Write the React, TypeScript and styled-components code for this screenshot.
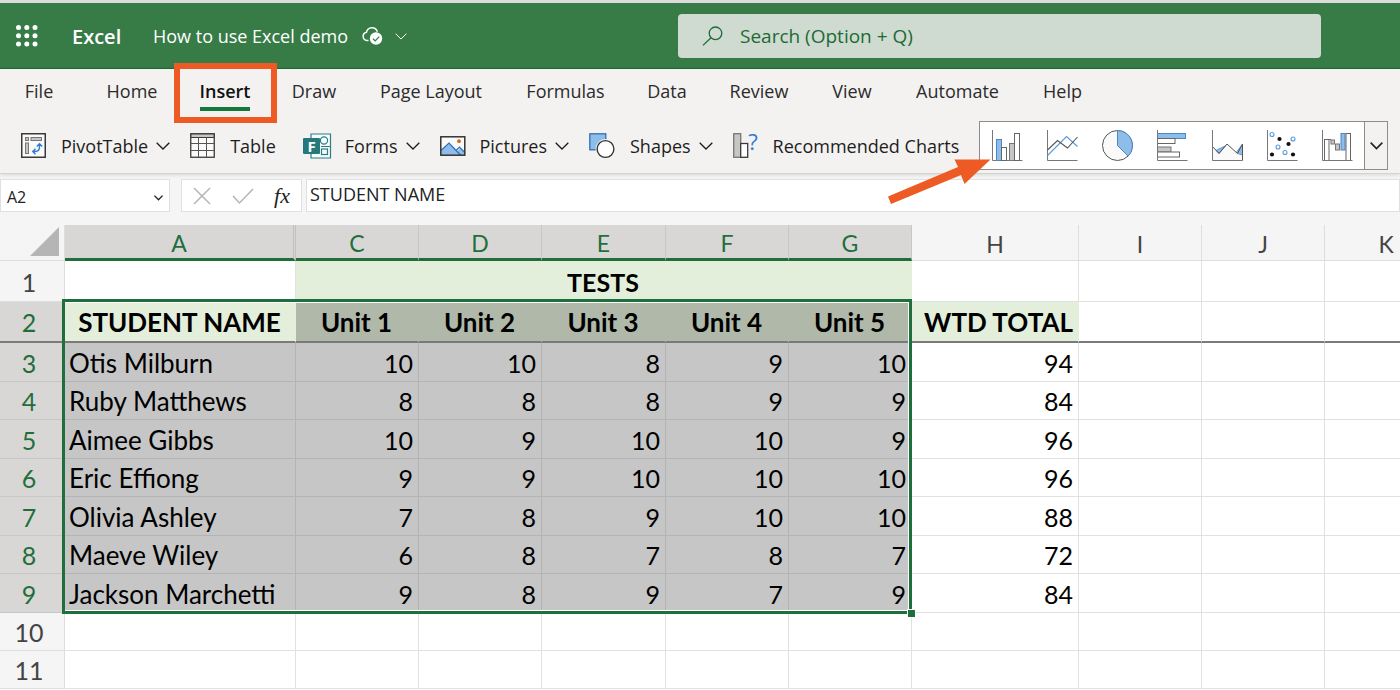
import React from "react";
import styled, { createGlobalStyle, css } from "styled-components";

const ui = `"Open Sans", "Noto Sans", sans-serif`;
const sheetFont = `Lato, "Open Sans", sans-serif`;

const color = {
  brand: "#377b47",
  brandDark: "#1f6f3c",
  accent: "#ee5a24",
  ribbon: "#f3f2f1",
  line: "#e1e1e1",
  blue: "#8fbde9",
  blueLine: "#2f6fb8",
};

const GlobalStyle = createGlobalStyle`
  * { box-sizing: border-box; }
  body { margin: 0; background: #fff; font-family: ${ui}; color: #222; overflow: hidden; }
  button, input { font: inherit; color: inherit; border: 0; margin: 0; padding: 0; background: none; outline: none; }
  button { display: flex; align-items: center; cursor: pointer; white-space: nowrap; }
  svg { display: block; flex: none; overflow: visible; }
`;

const Page = styled.div`
  display: flex;
  flex-direction: column;
  overflow: hidden;
`;

/* ---------- title bar ---------- */
const TitleBar = styled.header`
  display: flex;
  align-items: center;
  height: 69px;
  padding: 0 79px 0 16px;
  background: ${color.brand};
  border-top: 3px solid #dcdcdc;
  border-bottom: 1px solid #1e6b33;
  color: #fff;
`;
const TitleGroup = styled.div`
  display: flex;
  align-items: center;
  flex: 0 0 662px;
  padding-top: 1px;
`;
const AppName = styled.span`
  margin-left: 34px;
  width: 81px;
  font-size: 20px;
  font-weight: 600;
`;
const DocName = styled.button`
  gap: 14px;
  font-size: 18px;
  svg + svg { margin-left: -2px; }
`;
const SearchBox = styled.label`
  display: flex;
  align-items: center;
  flex: 1;
  gap: 16px;
  height: 44px;
  padding-left: 24px;
  border-radius: 4px;
  background: #cfdbd0;
  color: #1d6a35;
`;
const SearchInput = styled.input`
  flex: 1;
  font-size: 19px;
  &::placeholder { color: #1d6a35; opacity: 1; }
`;

/* ---------- ribbon ---------- */
const Ribbon = styled.div`
  background: ${color.ribbon};
  border-bottom: 1px solid #d4d3d2;
  box-shadow: 0 1px 4px rgba(0, 0, 0, 0.12);
  position: relative;
`;
const Tabs = styled.nav`
  display: flex;
  height: 52px;
  padding-left: 3px;
`;
const Tab = styled.button<{ $w: number; $active?: boolean }>`
  position: relative;
  justify-content: center;
  width: ${(p) => p.$w}px;
  height: 44px;
  font-size: 18px;
  font-weight: ${(p) => (p.$active ? 600 : 400)};
  color: ${(p) => (p.$active ? "#111" : "#2b2b2b")};
  &:first-child { margin-right: 10px; }
  ${(p) =>
    p.$active &&
    css`
      &::after {
        content: "";
        position: absolute;
        left: 21px;
        right: 21px;
        bottom: 2px;
        height: 4px;
        background: #12793b;
      }
    `}
`;
const Highlight = styled.span`
  position: absolute;
  z-index: 2;
  inset: -6px -6px -10px -5px;
  border: 6px solid ${color.accent};
  pointer-events: none;
`;
const Tools = styled.div`
  display: flex;
  align-items: center;
  height: 52px;
  padding: 0 12px 3px 21px;
`;
const Tool = styled.button<{ $gap: number }>`
  gap: 15px;
  margin-right: ${(p) => p.$gap}px;
  font-size: 18px;
  color: #1d1d1d;
  svg + span { display: flex; align-items: center; gap: 8px; }
`;
const Gallery = styled.div`
  position: relative;
  display: flex;
  height: 49px;
  margin-left: auto;
  border: 1px solid #8c8c8c;
  background: #fff;
`;
const GalleryItems = styled.div`
  display: flex;
  gap: 24px;
  padding: 0 11px 0 12px;
`;
const GalleryMore = styled.button`
  justify-content: center;
  width: 23px;
  border-left: 1px solid #8c8c8c;
  background: ${color.ribbon};
`;
const Arrow = styled.svg`
  position: absolute;
  z-index: 3;
  left: -94px;
  top: 36px;
  pointer-events: none;
`;

/* ---------- formula bar ---------- */
const FormulaBar = styled.div`
  display: flex;
  align-items: center;
  height: 51px;
  padding-bottom: 8px;
  background: #f5f5f5;
`;
const Field = styled.div<{ $w?: number; $mr?: number }>`
  display: flex;
  align-items: center;
  min-width: 0;
  height: 33px;
  flex: ${(p) => (p.$w ? `0 0 ${p.$w}px` : "1")};
  margin-right: ${(p) => p.$mr ?? 0}px;
  border: 1px solid #e0e0e0;
  background: #fff;
`;
const FieldInput = styled.input<{ $size: number; $pad: string }>`
  flex: 1;
  width: 0;
  min-width: 0;
  padding: ${(p) => p.$pad};
  font-size: ${(p) => p.$size}px;
`;
const DropButton = styled.button`
  padding: 4px 6px 0;
`;
const Actions = styled(Field)`
  justify-content: space-between;
  padding: 0 11px;
`;
const FxButton = styled.button`
  font: italic 22px/26px "Liberation Serif", serif;
`;

/* ---------- sheet ---------- */
const SheetArea = styled.main`
  position: relative;
  background: #fff;
`;
const Sheet = styled.table`
  table-layout: fixed;
  width: 1448px;
  border-collapse: separate;
  border-spacing: 0;
  font-family: ${sheetFont};
  font-size: 25px;
  line-height: 30px;
  color: #000;
`;
const Row = styled.tr<{ $h: number; $frozen?: boolean }>`
  height: ${(p) => p.$h}px;
  ${(p) =>
    p.$frozen &&
    css`
      && > * { border-bottom: 2px solid #7a7a7a; }
    `}
`;
const HeadCell = styled.th<{ $on?: boolean; $hiddenNext?: boolean }>`
  padding: 2px 0 0;
  font-size: 23px;
  font-weight: 400;
  color: ${(p) => (p.$on ? color.brandDark : "#444")};
  background: ${(p) => (p.$on ? "#d9d7d6" : "#f5f5f5")};
  border-right: ${(p) => (p.$hiddenNext ? "3px double #c2c0bf" : `1px solid ${p.$on ? "#c9c7c6" : "#dedede"}`)};
  border-bottom: ${(p) => (p.$on ? `3px solid ${color.brandDark}` : "1px solid #dedede")};
`;
const RowHead = styled.th<{ $on?: boolean }>`
  padding: 1px 6px 0 0;
  font-weight: 400;
  color: ${(p) => (p.$on ? color.brandDark : "#444")};
  background: ${(p) => (p.$on ? "#d9d7d6" : "#f5f5f5")};
  border-right: 1px solid #dedede;
  border-bottom: 1px solid ${(p) => (p.$on ? "#c9c7c6" : "#dedede")};
`;
const Corner = styled.td`
  padding: 0 5px 4px 0;
  background: #f5f5f5;
  border-right: 1px solid #dedede;
  border-bottom: 1px solid #dedede;
  vertical-align: bottom;
  svg { margin-left: auto; }
`;
type Fill = "none" | "green" | "greenOn" | "on";
const fills: Record<Fill, [string, string]> = {
  none: ["#fff", color.line],
  green: ["#e3efda", "#e3efda"],
  greenOn: ["#b0b9a9", "#b0b9a9"],
  on: ["#c6c6c6", "#b4b4b4"],
};
const Cell = styled.td<{ $fill?: Fill; $align?: string; $bold?: boolean; $large?: boolean }>`
  padding: 1px 5px 0 4px;
  white-space: nowrap;
  text-align: ${(p) => p.$align ?? "right"};
  font-size: ${(p) => (p.$large ? 26 : 25)}px;
  font-weight: ${(p) => (p.$bold ? 700 : 400)};
  background: ${(p) => fills[p.$fill ?? "none"][0]};
  border-right: 1px solid ${(p) => fills[p.$fill ?? "none"][1]};
  border-bottom: 1px solid ${(p) => fills[p.$fill ?? "none"][1]};
`;
const Selection = styled.div`
  position: absolute;
  left: 62px;
  top: 74px;
  width: 850px;
  height: 315px;
  border: 3px solid ${color.brandDark};
  box-shadow: inset -1px 1px 0 #fff, inset 0 -1px 0 #fff;
  pointer-events: none;
`;
const FillHandle = styled.i`
  position: absolute;
  right: -7px;
  bottom: -7px;
  width: 9px;
  height: 9px;
  border: 1px solid #fff;
  background: ${color.brandDark};
`;

/* ---------- icons ---------- */
const Chevron = ({ w = 14, sw = 1.3 }: { w?: number; sw?: number }) => (
  <svg width={w} height={w / 2 + 1} viewBox="0 0 14 8" fill="none" stroke="currentColor" strokeWidth={sw * (14 / w)}>
    <path d="M.7.7 7 7 13.3.7" />
  </svg>
);

const Waffle = () => (
  <svg width="22" height="22" fill="#fff">
    {[2.5, 10.8, 19].map((y) => [2.5, 10.8, 19].map((x) => <circle key={`${x}-${y}`} cx={x} cy={y} r="2.5" />))}
  </svg>
);

const CloudSaved = () => (
  <svg width="21" height="20" viewBox="0 0 21 20">
    <path d="M6.500 14.500H5A4.200 4.200 0 0 1 4.500 6.200 5.600 5.600 0 0 1 15.400 5.800" fill="none" stroke="#fff" strokeWidth="1.500" />
    <circle cx="14" cy="12.500" r="6.200" fill="#fff" />
    <path d="m11 12.800 2.200 2.100 4-4.300" fill="none" stroke={color.brand} strokeWidth="1.300" />
  </svg>
);

const SearchIcon = () => (
  <svg width="22" height="20" viewBox="0 0 22 20" fill="none" stroke="#1d6a35" strokeWidth="1.300">
    <circle cx="13.500" cy="7.300" r="6.300" />
    <path d="M9 11.800 1 19.400" />
  </svg>
);

const PivotIcon = () => (
  <svg width="25" height="25" fill="none">
    <rect x=".75" y=".75" width="23.500" height="23.500" fill="#fafafa" stroke="#3a3a3a" strokeWidth="1.500" />
    <g fill="#c8c6c4" stroke="#777">
      <rect x="4.500" y="4.500" width="3" height="3" />
      <rect x="10" y="4.500" width="10.500" height="3" />
      <rect x="4.500" y="10" width="3" height="10.500" />
    </g>
    <path d="M18.500 11V14q0 4.500-4.500 4.500h-2M15.800 13.500 18.500 10.800l2.700 2.700M14.500 15.800 11.800 18.500l2.700 2.700" stroke="#2b7cd3" strokeWidth="1.400" />
  </svg>
);

const TableIcon = () => (
  <svg width="25" height="25" fill="none" stroke="#3a3a3a">
    <rect x=".75" y=".75" width="23.500" height="23.500" fill="#fafafa" strokeWidth="1.300" />
    <rect x="1" y="1" width="23" height="3.500" fill="#c8c6c4" />
    <path d="M8.500 4.500V24M16.500 4.500V24M1 10.500h23M1 17.500h23" stroke="#555" />
  </svg>
);

const FormsIcon = () => (
  <svg width="26" height="26" fill="none" stroke="#2b7f83" strokeWidth="1.200">
    <path d="M7 1H26.500V25H7zM17 13.500H26.500" fill="#f8fbfb" />
    <circle cx="20" cy="7.500" r="3.600" />
    <rect x="17.500" y="16" width="6" height="5.500" />
    <rect x="-1" y="5" width="17" height="16" rx="1" fill="#24797d" stroke="none" />
    <text x="7.500" y="18.500" textAnchor="middle" fontFamily="Open Sans" fontWeight="700" fontSize="15" fill="#fff" stroke="none">F</text>
  </svg>
);

const PictureIcon = () => (
  <svg width="25" height="20" fill="none">
    <rect x=".8" y=".8" width="24" height="18.400" fill="#fafafa" />
    <path d="M1 14.500 9 7l8.500 8L20 12l5 4.500V19H1z" fill={color.blue} />
    <path d="M1 14.500 9 7l11.500 12M16 14.500l3.500-3.500 5.300 5.500" stroke={color.blueLine} strokeWidth="1.200" />
    <rect x=".8" y=".8" width="24" height="18.400" stroke="#333" strokeWidth="1.500" />
    <circle cx="19" cy="5.200" r="1.900" fill="#d8651f" />
  </svg>
);

const ShapesIcon = () => (
  <svg width="26" height="25">
    <rect x=".8" y=".8" width="16" height="16" fill={color.blue} stroke={color.blueLine} strokeWidth="1.300" />
    <circle cx="16.500" cy="16" r="10" fill={color.ribbon} />
    <circle cx="16.500" cy="16" r="8.400" fill="#fff" stroke="#333" strokeWidth="1.400" />
  </svg>
);

const RecommendedIcon = () => (
  <svg width="25" height="25">
    <rect x=".7" y=".7" width="7" height="23.600" fill="#c8c6c4" stroke="#777" strokeWidth="1.300" />
    <rect x="7.700" y="10.500" width="7" height="13.800" fill="#fff" stroke="#3a3a3a" strokeWidth="1.300" />
    <text x="20" y="16.500" textAnchor="middle" fontFamily="Open Sans" fontSize="22" fill="#2b7cd3">?</text>
  </svg>
);

const Axes = () => <path d="M.5 0V30.500H30.500" fill="none" stroke="#777" />;
const white = { fill: "#fff", stroke: "#666", strokeWidth: 1 };
const gray = { fill: "#c8c6c4", stroke: "#777", strokeWidth: 1 };
const blue = { fill: color.blue, stroke: "#4b86c6", strokeWidth: 1 };

const chartIcons: [string, React.ReactNode][] = [
  ["Column", <>
    <Axes />
    <rect x="4.500" y="9.500" width="5" height="21" {...blue} />
    <rect x="9.500" y="17.500" width="5" height="13" {...white} />
    <rect x="17.500" y="13.500" width="5" height="17" {...gray} />
    <rect x="22.500" y="3.500" width="5" height="27" {...white} />
  </>],
  ["Line", <>
    <Axes />
    <path d="M.5 25.500 19.500 6.500 30.500 16.500" fill="none" stroke="#5b9bdc" strokeWidth="1.200" />
    <path d="M.5 20 10.500 10.500 20.500 18 30.500 7" fill="none" stroke="#555" strokeWidth="1.100" />
  </>],
  ["Pie", <>
    <circle cx="15.500" cy="15.500" r="15" fill="#fafafa" stroke="#555" />
    <path d="M15.500 15.500V.5A15 15 0 0 1 26.100 26.100z" {...blue} />
  </>],
  ["Bar", <>
    <rect x=".5" y="3.500" width="28" height="5" {...blue} />
    <rect x=".5" y="8.500" width="17.500" height="5" {...white} />
    <rect x=".5" y="17" width="13.500" height="5" {...gray} />
    <rect x=".5" y="22" width="22" height="5" {...white} />
    <Axes />
  </>],
  ["Area", <>
    <path d="M.5 16.500 7 23.500 15 14 25.500 23.500 30.500 14V30.500H.5z" fill="#fafafa" />
    <path d="M4 20.500 7 23.500 13.500 15.800zM25 21.500 30.500 14V25L25.500 23.500z" fill={color.blue} stroke="#4b86c6" strokeWidth=".8" />
    <path d="M.5 16.500 7 23.500 15 14 25.500 23.500 30.500 14V30.500" fill="none" stroke="#555" />
    <Axes />
  </>],
  ["Scatter", <>
    <Axes />
    {[[5, 4.5], [26, 9], [11, 17], [18, 22.5]].map(([x, y]) => (
      <circle key={x} cx={x} cy={y} r="2" fill="#fff" stroke="#5b9bdc" strokeWidth="1.100" />
    ))}
    {[[12.5, 9], [21.5, 14], [5, 24.5], [26, 24.5]].map(([x, y]) => (
      <circle key={x} cx={x} cy={y} r="2.100" fill="#111" />
    ))}
  </>],
  ["Waterfall", <>
    <rect x="2.500" y="9.500" width="4.500" height="21" {...white} />
    <path d="M7 9.500h2" stroke="#666" />
    <rect x="9" y="10" width="3.500" height="4" {...gray} />
    <rect x="13.500" y="14" width="4" height="6" {...gray} />
    <rect x="19" y="3.500" width="4" height="16.500" {...blue} />
    <rect x="24" y="3.500" width="4.500" height="27" {...white} />
    <Axes />
  </>],
];

/* ---------- data ---------- */
const tabs = [
  { label: "File", w: 72 },
  { label: "Home", w: 94 },
  { label: "Insert", w: 92 },
  { label: "Draw", w: 86 },
  { label: "Page Layout", w: 148 },
  { label: "Formulas", w: 121 },
  { label: "Data", w: 82 },
  { label: "Review", w: 102 },
  { label: "View", w: 84 },
  { label: "Automate", w: 127 },
  { label: "Help", w: 83 },
];

const tools: { label: string; icon: React.ReactNode; menu?: boolean; gap: number }[] = [
  { label: "PivotTable", icon: <PivotIcon />, menu: true, gap: 20 },
  { label: "Table", icon: <TableIcon />, gap: 28 },
  { label: "Forms", icon: <FormsIcon />, menu: true, gap: 20 },
  { label: "Pictures", icon: <PictureIcon />, menu: true, gap: 20 },
  { label: "Shapes", icon: <ShapesIcon />, menu: true, gap: 20 },
  { label: "Recommended Charts", icon: <RecommendedIcon />, gap: 0 },
];

const columns = [
  { name: "A", w: 231 }, { name: "C", w: 123 }, { name: "D", w: 123 }, { name: "E", w: 124 }, { name: "F", w: 123 },
  { name: "G", w: 123 }, { name: "H", w: 167 }, { name: "I", w: 123 }, { name: "J", w: 123 }, { name: "K", w: 123 },
];

const students: [string, number[], number][] = [
  ["Otis Milburn", [10, 10, 8, 9, 10], 94],
  ["Ruby Matthews", [8, 8, 8, 9, 9], 84],
  ["Aimee Gibbs", [10, 9, 10, 10, 9], 96],
  ["Eric Effiong", [9, 9, 10, 10, 10], 96],
  ["Olivia Ashley", [7, 8, 9, 10, 10], 88],
  ["Maeve Wiley", [6, 8, 7, 8, 7], 72],
  ["Jackson Marchetti", [9, 8, 9, 7, 9], 84],
];

const Blank = ({ n }: { n: number }) => <>{Array.from({ length: n }, (_, i) => <Cell key={i} />)}</>;

export default function App() {
  return (
    <Page>
      <GlobalStyle />
      <TitleBar>
        <TitleGroup>
          <button aria-label="App launcher"><Waffle /></button>
          <AppName>Excel</AppName>
          <DocName>
            How to use Excel demo
            <CloudSaved />
            <Chevron w={12} sw={1} />
          </DocName>
        </TitleGroup>
        <SearchBox>
          <SearchIcon />
          <SearchInput aria-label="Search" placeholder="Search (Option + Q)" />
        </SearchBox>
      </TitleBar>

      <Ribbon>
        <Tabs>
          {tabs.map((t) => (
            <Tab key={t.label} $w={t.w} $active={t.label === "Insert"}>
              {t.label}
              {t.label === "Insert" && <Highlight />}
            </Tab>
          ))}
        </Tabs>
        <Tools>
          {tools.map((t) => (
            <Tool key={t.label} $gap={t.gap}>
              {t.icon}
              <span>
                {t.label}
                {t.menu && <Chevron />}
              </span>
            </Tool>
          ))}
          <Gallery>
            <GalleryItems>
              {chartIcons.map(([name, art]) => (
                <button key={name} aria-label={`${name} chart`}>
                  <svg width="31" height="31">{art}</svg>
                </button>
              ))}
            </GalleryItems>
            <GalleryMore aria-label="More charts"><Chevron w={13} sw={1.6} /></GalleryMore>
            <Arrow width="106" height="48" fill={color.accent}>
              <path d="M2 38.500 72 9 68.500 1.500 104.500 1.500 78.500 26 75 17 5 46z" />
            </Arrow>
          </Gallery>
        </Tools>
      </Ribbon>

      <FormulaBar>
        <Field $w={170} $mr={11}>
          <FieldInput $size={16} $pad="3px 0 0 6px" aria-label="Name box" defaultValue="A2" />
          <DropButton aria-label="Open name list"><Chevron w={9} sw={1.4} /></DropButton>
        </Field>
        <Actions $w={121} $mr={4}>
          <button aria-label="Cancel">
            <svg width="18" height="18" stroke="#b5b5b5" strokeWidth="1.500"><path d="m1 1 16 16M17 1 1 17" /></svg>
          </button>
          <button aria-label="Enter">
            <svg width="22" height="16" fill="none" stroke="#b5b5b5" strokeWidth="1.500"><path d="m1 8 6.500 7L21 1" /></svg>
          </button>
          <FxButton aria-label="Insert function">fx</FxButton>
        </Actions>
        <Field>
          <FieldInput $size={18} $pad="0 0 3px 3px" aria-label="Formula" defaultValue="STUDENT NAME" />
        </Field>
      </FormulaBar>

      <SheetArea>
        <Sheet>
          <colgroup>
            <col style={{ width: 65 }} />
            {columns.map((c) => <col key={c.name} style={{ width: c.w }} />)}
          </colgroup>
          <thead>
            <Row $h={36}>
              <Corner>
                <svg width="29" height="29" fill="#b5b5b5"><path d="M29 0V29H0z" /></svg>
              </Corner>
              {columns.map((c, i) => (
                <HeadCell key={c.name} scope="col" $on={i < 6} $hiddenNext={i === 0}>{c.name}</HeadCell>
              ))}
            </Row>
          </thead>
          <tbody>
            <Row $h={41}>
              <RowHead scope="row">1</RowHead>
              <Cell />
              <Cell colSpan={5} $fill="green" $align="center" $bold>TESTS</Cell>
              <Blank n={4} />
            </Row>
            <Row $h={41} $frozen>
              <RowHead scope="row" $on>2</RowHead>
              <Cell $fill="green" $align="center" $bold $large>STUDENT NAME</Cell>
              {[1, 2, 3, 4, 5].map((n) => (
                <Cell key={n} $fill="greenOn" $align="center" $bold $large>Unit {n}</Cell>
              ))}
              <Cell $fill="green" $bold $large>WTD TOTAL</Cell>
              <Blank n={3} />
            </Row>
            {students.map(([name, scores, total], i) => (
              <Row key={name} $h={i % 2 ? 38 : 39}>
                <RowHead scope="row" $on>{i + 3}</RowHead>
                <Cell $fill="on" $align="left" $large>{name}</Cell>
                {scores.map((s, j) => <Cell key={j} $fill="on">{s}</Cell>)}
                <Cell>{total}</Cell>
                <Blank n={3} />
              </Row>
            ))}
            {[10, 11].map((n) => (
              <Row key={n} $h={38}>
                <RowHead scope="row">{n}</RowHead>
                <Blank n={10} />
              </Row>
            ))}
          </tbody>
        </Sheet>
        <Selection><FillHandle /></Selection>
      </SheetArea>
    </Page>
  );
}
